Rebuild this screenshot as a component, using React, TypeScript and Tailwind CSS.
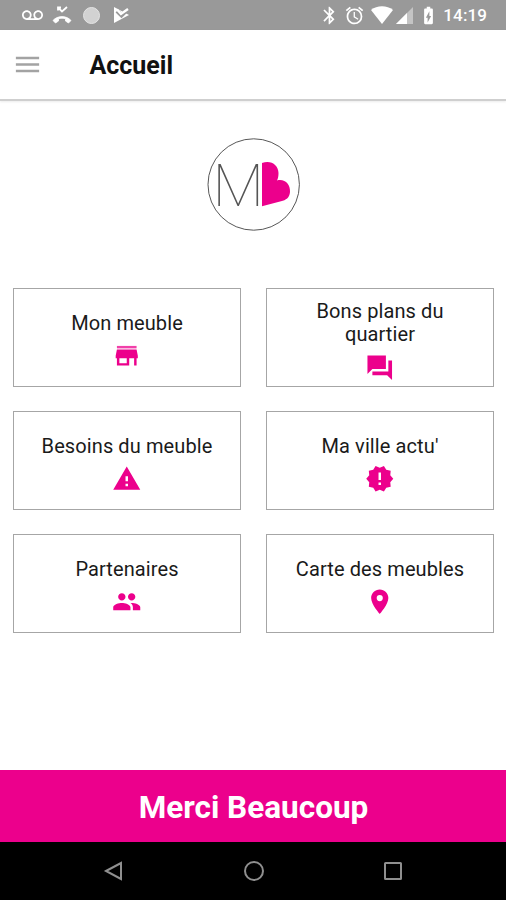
import type { ReactNode } from 'react';
import type { IconType } from 'react-icons';
import {
  MdAlarm,
  MdBatteryChargingFull,
  MdBluetooth,
  MdLocationOn,
  MdMenu,
  MdNewReleases,
  MdVoicemail,
  MdWarning,
} from 'react-icons/md';

interface IconProps {
  className?: string;
}

interface Tile {
  label: string;
  icon: IconType | ((props: IconProps) => ReactNode);
}

function StoreIcon({ className }: IconProps) {
  return (
    <svg className={className} viewBox="0 0 24 24" fill="currentColor">
      <path d="M20 4H4v2h16V4z" opacity="0.75" />
      <path d="M21 14v-2l-1-5H4l-1 5v2h1v6h10v-6h4v6h2v-6h1zm-9 4H6v-4h6v4z" />
    </svg>
  );
}

function ForumIcon({ className }: IconProps) {
  return (
    <svg className={className} viewBox="0 0 24 24" fill="currentColor">
      <path d="M22 6h-3v9H6v3h12l4 4V6zm-5 7V2H2v15l4-4h11z" />
    </svg>
  );
}

function PeopleIcon({ className }: IconProps) {
  return (
    <svg className={className} viewBox="0 0 24 24" fill="currentColor">
      <path d="M16 11c1.66 0 2.99-1.34 2.99-3S17.66 5 16 5s-3 1.34-3 3 1.34 3 3 3zm-8 0c1.66 0 2.99-1.34 2.99-3S9.66 5 8 5 5 6.34 5 8s1.34 3 3 3zm0 2c-2.33 0-7 1.17-7 3.5V19h14v-2.5c0-2.33-4.67-3.5-7-3.5zm8 0c-.29 0-.62.02-.97.05 1.16.84 1.97 1.97 1.97 3.45V19h6v-2.5c0-2.33-4.67-3.5-7-3.5z" />
    </svg>
  );
}

function MissedCallIcon({ className }: IconProps) {
  return (
    <svg className={className} viewBox="0 0 20 20" fill="none" stroke="currentColor">
      <path d="M6 5.500V2.500H9M6 2.500L10 6.500L15 2" strokeWidth="1.8" />
      <path
        d="M1 15.500C5.500 10.300 14.500 10.300 19 15.500L16.500 18L13.500 16V13.800C11 13 9 13 6.500 13.800V16L3.500 18Z"
        fill="currentColor"
        strokeWidth="0.8"
        strokeLinejoin="round"
      />
    </svg>
  );
}

const tiles: Tile[] = [
  { label: 'Mon meuble', icon: StoreIcon },
  { label: 'Bons plans du quartier', icon: ForumIcon },
  { label: 'Besoins du meuble', icon: MdWarning },
  { label: "Ma ville actu'", icon: MdNewReleases },
  { label: 'Partenaires', icon: PeopleIcon },
  { label: 'Carte des meubles', icon: MdLocationOn },
];

function StatusBar() {
  return (
    <div className="flex h-[30px] items-center justify-between bg-[#999999] pl-[22px] pr-[19px] text-white">
      <div className="flex items-center">
        <MdVoicemail className="size-[21px]" />
        <MissedCallIcon className="ml-[9px] size-[20px]" />
        <span className="ml-[11px] size-[17px] rounded-full border border-[#e4e4e4] bg-[#d2d2d2]" />
        <svg className="ml-[13px] h-[18px] w-[17px]" viewBox="0 0 17 18">
          <path d="M1 1L16 9L1 17Z" fill="white" />
          <path d="M4 5L8.5 9.5L15 3" fill="none" stroke="#999999" strokeWidth="4" />
          <path d="M4 3.5L8 8L15 3" fill="none" stroke="white" strokeWidth="2.4" />
        </svg>
      </div>
      <div className="flex items-center">
        <MdBluetooth className="size-[21px]" />
        <MdAlarm className="ml-[4px] size-[21px]" />
        <svg className="ml-[6px] h-[18px] w-[22px]" viewBox="0 0 22 18">
          <path d="M0 4C6-1 16-1 22 4L11 18Z" fill="white" />
        </svg>
        <svg className="ml-[3px] size-[17px]" viewBox="0 0 17 17">
          <path d="M17 0V17H0Z" fill="#c4c4c4" />
          <path d="M11 6V17H0Z" fill="white" />
        </svg>
        <MdBatteryChargingFull className="ml-[5px] size-[21px]" />
        <span className="ml-[4px] text-[17px] font-medium leading-[30px] tracking-[0.1px]">14:19</span>
      </div>
    </div>
  );
}

function Header({ title }: { title: string }) {
  return (
    <header className="flex h-[71px] items-center border-b-2 border-[#cfcfcf] pl-[12px] shadow-[0_1px_2px_rgba(0,0,0,0.08)]">
      <MdMenu className="size-[31px] text-[#a3a3a3]" />
      <h1 className="ml-[46.5px] pt-[2px] text-[25px] font-bold text-[#111111]">{title}</h1>
    </header>
  );
}

function Logo() {
  return (
    <svg className="ml-px size-[96px]" viewBox="0 0 96 96">
      <circle cx="47.7" cy="47.5" r="45.7" fill="none" stroke="#444444" strokeWidth="0.9" />
      <text
        x="32.2"
        y="69"
        textAnchor="middle"
        fill="#555555"
        className="font-['Roboto'] text-[60px] font-thin"
      >
        M
      </text>
      <path
        d="M56 25.900C65 22.500 72.500 28 72.500 36C72.500 39 72 41.500 71 43.500C79 41.500 84.500 47.500 84 55C83.500 61 80 63 75 64.300L56 69.300Z"
        fill="#ec008c"
      />
    </svg>
  );
}

function TileButton({ label, icon: Icon }: Tile) {
  return (
    <button className="flex h-[99px] flex-col items-center justify-center border border-[#a6a6a6] px-5 pt-2">
      <span className="pl-px text-[20px] leading-[23.5px] tracking-[0.1px] text-[#1a1a1a]">{label}</span>
      <Icon className="mt-[6px] size-[29.5px] shrink-0 text-[#ec008c]" />
    </button>
  );
}

function NavIcon({ children }: { children: ReactNode }) {
  return (
    <svg className="size-[22px]" viewBox="0 0 22 22" fill="none" stroke="#8f8f8f" strokeWidth="2">
      {children}
    </svg>
  );
}

function NavigationBar() {
  return (
    <nav className="flex h-[58px] items-center justify-between bg-black pl-[103px] pr-[102px]">
      <NavIcon>
        <path d="M3 11L18 3V19Z" />
      </NavIcon>
      <NavIcon>
        <circle cx="11" cy="11" r="9" />
      </NavIcon>
      <NavIcon>
        <rect x="3" y="3" width="16" height="16" rx="0.5" />
      </NavIcon>
    </nav>
  );
}

export default function App() {
  return (
    <div className="flex h-[900px] w-[506px] flex-col overflow-hidden bg-white font-['Roboto',sans-serif]">
      <StatusBar />
      <Header title="Accueil" />
      <main className="flex flex-1 flex-col items-center pt-[36px]">
        <Logo />
        <div className="mt-[54.5px] grid w-full grid-cols-2 gap-x-[25px] gap-y-[24px] px-[12.5px]">
          {tiles.map((tile) => (
            <TileButton key={tile.label} {...tile} />
          ))}
        </div>
      </main>
      <button className="h-[72px] bg-[#ec008c] pl-px pt-[3px] text-[31.5px] font-bold text-white">
        Merci Beaucoup
      </button>
      <NavigationBar />
    </div>
  );
}
